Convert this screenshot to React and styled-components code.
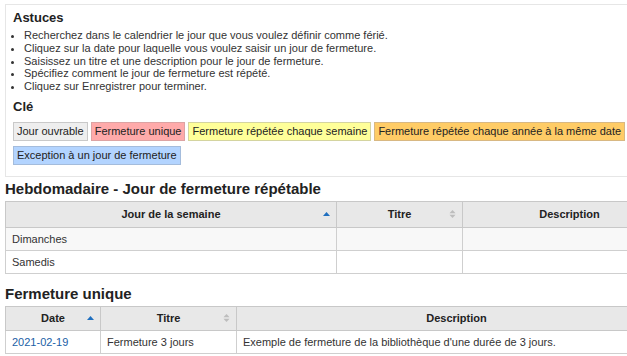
import React from "react";
import styled, { createGlobalStyle } from "styled-components";

const Global = createGlobalStyle`
  html, body { margin: 0; padding: 0; overflow: hidden; background: #fff; }
  body { font-family: "Liberation Sans", Arial, sans-serif; font-size: 11px; color: #333; }
`;

const Page = styled.div`
  width: 672px;
  padding: 4px 0 0 5px;
`;

const Panel = styled.section`
  border: 1px solid #e6e6e6;
  background: #fff;
  padding: 5px 7px 11px;
`;

const PanelTitle = styled.h3`
  margin: ${(p) => p.$mt || 0}px 0 0;
  font-size: 13px;
  line-height: 16px;
  font-weight: bold;
  color: #222;
`;

const Tips = styled.ul`
  margin: 3px 0 0;
  padding: 0 0 0 11px;
  font-size: 11px;
  line-height: 12.75px;
  color: #333;
`;

const Legend = styled.div`
  display: flex;
  flex-wrap: wrap;
  gap: 5px 3px;
  margin-top: 7px;
  width: 625px;
`;

const swatch = {
  work: ["#eeeeee", "#c9c9c9"],
  single: ["#ffaaaa", "#dca3a3"],
  weekly: ["#ffff99", "#d4d4a0"],
  yearly: ["#ffcc66", "#d8b883"],
  exception: ["#b3d4ff", "#a4bcdc"],
};

const Badge = styled.span`
  display: inline-block;
  padding: 2px 3px;
  line-height: 13px;
  font-size: 11px;
  color: #222;
  background: ${(p) => swatch[p.$kind][0]};
  border: 1px solid ${(p) => swatch[p.$kind][1]};
`;

const SectionTitle = styled.h2`
  margin: ${(p) => p.$mt}px 0 3px;
  font-size: 15px;
  line-height: 18px;
  font-weight: bold;
  color: #222;
`;

const Table = styled.table`
  border-collapse: collapse;
  table-layout: fixed;
  width: 100%;
  font-size: 11px;
  border: 1px solid #c8c8c8;
`;

const Th = styled.th`
  position: relative;
  background: #e8e8e8;
  border: 1px solid #c8c8c8;
  height: ${(p) => p.$h}px;
  padding: 0 6px;
  box-sizing: border-box;
  font-weight: bold;
  color: #222;
  text-align: center;
`;

const Td = styled.td`
  border: 1px solid #cfcfcf;
  height: 23px;
  padding: 0 6px;
  box-sizing: border-box;
  color: #333;
  background: ${(p) => (p.$alt ? "#f8f8f8" : "#fff")};
`;

const Link = styled.a`
  color: #1a5ea6;
  text-decoration: none;
`;

const SortIcon = styled.svg`
  position: absolute;
  right: ${(p) => p.$r}px;
  top: 50%;
  transform: translateY(-50%);
`;

const SortAsc = ({ r }) => (
  <SortIcon $r={r} width="7" height="5" viewBox="0 0 7 5">
    <polygon points="0,4.5 3.5,0.5 7,4.5" fill="#1f6fbf" />
  </SortIcon>
);

const SortBoth = ({ r }) => (
  <SortIcon $r={r} width="7" height="9" viewBox="0 0 7 9">
    <polygon points="0.5,3.8 3.5,0.5 6.5,3.8" fill="#bdbdbd" />
    <polygon points="0.5,5.2 3.5,8.5 6.5,5.2" fill="#bdbdbd" />
  </SortIcon>
);

export default function App() {
  return (
    <>
      <Global />
      <Page>
        <Panel>
          <PanelTitle>Astuces</PanelTitle>
          <Tips>
            <li>Recherchez dans le calendrier le jour que vous voulez définir comme férié.</li>
            <li>Cliquez sur la date pour laquelle vous voulez saisir un jour de fermeture.</li>
            <li>Saisissez un titre et une description pour le jour de fermeture.</li>
            <li>Spécifiez comment le jour de fermeture est répété.</li>
            <li>Cliquez sur Enregistrer pour terminer.</li>
          </Tips>
          <PanelTitle $mt={6}>Clé</PanelTitle>
          <Legend>
            <Badge $kind="work">Jour ouvrable</Badge>
            <Badge $kind="single">Fermeture unique</Badge>
            <Badge $kind="weekly">Fermeture répétée chaque semaine</Badge>
            <Badge $kind="yearly">Fermeture répétée chaque année à la même date</Badge>
            <Badge $kind="exception">Exception à un jour de fermeture</Badge>
          </Legend>
        </Panel>

        <SectionTitle $mt={3}>Hebdomadaire - Jour de fermeture répétable</SectionTitle>
        <Table>
          <colgroup>
            <col style={{ width: 331 }} />
            <col style={{ width: 126 }} />
            <col />
          </colgroup>
          <thead>
            <tr>
              <Th $h={26}>Jour de la semaine<SortAsc r={6} /></Th>
              <Th $h={26}>Titre<SortBoth r={6} /></Th>
              <Th $h={26}>Description</Th>
            </tr>
          </thead>
          <tbody>
            <tr>
              <Td $alt>Dimanches</Td>
              <Td $alt></Td>
              <Td $alt></Td>
            </tr>
            <tr>
              <Td>Samedis</Td>
              <Td></Td>
              <Td></Td>
            </tr>
          </tbody>
        </Table>

        <SectionTitle $mt={11}>Fermeture unique</SectionTitle>
        <Table>
          <colgroup>
            <col style={{ width: 95 }} />
            <col style={{ width: 136 }} />
            <col />
          </colgroup>
          <thead>
            <tr>
              <Th $h={24}>Date<SortAsc r={6} /></Th>
              <Th $h={24}>Titre<SortBoth r={6} /></Th>
              <Th $h={24}>Description</Th>
            </tr>
          </thead>
          <tbody>
            <tr>
              <Td><Link href="#">2021-02-19</Link></Td>
              <Td>Fermeture 3 jours</Td>
              <Td>Exemple de fermeture de la bibliothèque d'une durée de 3 jours.</Td>
            </tr>
          </tbody>
        </Table>
      </Page>
    </>
  );
}
